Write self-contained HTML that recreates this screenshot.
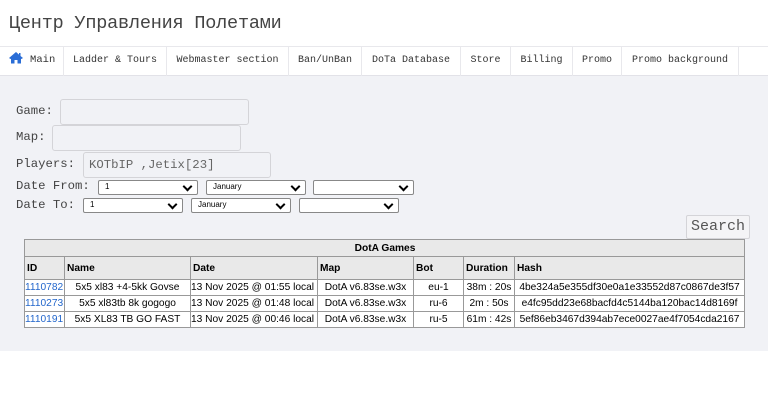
<!DOCTYPE html>
<html><head><meta charset="utf-8"><style>
*{box-sizing:border-box;margin:0;padding:0}
body{width:768px;height:401px;background:#fff;font-family:"Liberation Mono",monospace;color:#333;position:relative;overflow:hidden}
.title{position:absolute;left:9px;top:13px;font-size:18.5px;color:#444;letter-spacing:-0.2px}
.nav{position:absolute;left:0;top:46px;width:768px;height:30px;border-top:1px solid #e8e8ec;border-bottom:1px solid #e2e2e8}
.nav div{position:absolute;top:0;height:29px;line-height:27px;font-size:10px;color:#333;text-align:center;border-right:1px solid #e8e8ec}
.gray{position:absolute;left:0;top:76px;width:768px;height:275px;background:#f1f2f6}
.lbl{position:absolute;font-size:12.3px;color:#444}
.inp{position:absolute;background:#f1f2f6;border:1px solid #d4d4d8;border-radius:3px;font-size:12.3px;color:#666;padding:5px 0 0 5px}
.sel{position:absolute;height:15px;background:#fff;border:1px solid #888;border-radius:2px;font-family:"Liberation Sans",sans-serif;font-size:8px;padding:1px 0 0 6px;color:#000}
.sel::after{content:"";position:absolute;right:6px;top:2px;width:5px;height:5px;border-right:2px solid #000;border-bottom:2px solid #000;transform:rotate(45deg)}
.btn{position:absolute;left:686px;top:215px;width:64px;height:24px;border:1px solid #d4d4d8;border-radius:2px;background:#f4f4f6;font-size:15px;color:#555;text-align:center;line-height:22px}
table{position:absolute;left:24px;top:239px;width:720px;table-layout:fixed;border-collapse:collapse;font-family:"Liberation Sans",sans-serif;font-size:10.2px;color:#000;background:#fff}
td,th{border:1px solid #999;padding:0 1px;height:16px;white-space:nowrap;overflow:hidden}
th{background:#e9e9e9;text-align:left;font-weight:bold;height:23px;padding-left:2px}
th.cap{text-align:center;height:17px}
td{text-align:center}
td a{color:#2266cc;text-decoration:none}
td.l{text-align:left;padding:0}
</style></head><body>
<div class="title">Центр Управления Полетами</div>
<div class="nav">
<div style="left:0;width:64px;font-size:10.5px"><svg width="16" height="13" viewBox="0 0 16 13" style="vertical-align:-2px"><path d="M8 1 L1 7 L2.5 8 L3 7.7 V12.5 H6.5 V9 H9.5 V12.5 H13 V7.7 L13.5 8 L15 7 L12.5 5 V2 H11 V3.6 Z" fill="#2a6dd6"/></svg> Main</div>
<div style="left:64px;width:103px">Ladder &amp; Tours</div>
<div style="left:167px;width:122px">Webmaster section</div>
<div style="left:289px;width:73px">Ban/UnBan</div>
<div style="left:362px;width:99px">DoTa Database</div>
<div style="left:461px;width:50px">Store</div>
<div style="left:511px;width:62px">Billing</div>
<div style="left:573px;width:49px">Promo</div>
<div style="left:622px;width:117px">Promo background</div>
</div>
<div class="gray"></div>
<div class="lbl" style="left:16px;top:104px">Game:</div>
<div class="inp" style="left:60px;top:99px;width:189px;height:26px"></div>
<div class="lbl" style="left:16px;top:130px">Map:</div>
<div class="inp" style="left:52px;top:125px;width:189px;height:26px"></div>
<div class="lbl" style="left:16px;top:157px">Players:</div>
<div class="inp" style="left:83px;top:152px;width:188px;height:26px">KOTbIP ,Jetix[23]</div>
<div class="lbl" style="left:16px;top:179px">Date From:</div>
<div class="sel" style="left:98px;top:180px;width:100px">1</div>
<div class="sel" style="left:206px;top:180px;width:100px">January</div>
<div class="sel" style="left:313px;top:180px;width:101px"></div>
<div class="lbl" style="left:16px;top:198px">Date To:</div>
<div class="sel" style="left:83px;top:198px;width:100px">1</div>
<div class="sel" style="left:191px;top:198px;width:100px">January</div>
<div class="sel" style="left:299px;top:198px;width:100px"></div>
<div class="btn">Search</div>
<table>
<colgroup><col style="width:40px"><col style="width:126px"><col style="width:127px"><col style="width:96px"><col style="width:50px"><col style="width:51px"><col style="width:230px"></colgroup>
<tr><th class="cap" colspan="7">DotA Games</th></tr>
<tr><th>ID</th><th>Name</th><th>Date</th><th>Map</th><th>Bot</th><th>Duration</th><th>Hash</th></tr>
<tr><td class="l"><a>1110782</a></td><td>5x5 xl83 +4-5kk Govse</td><td class="l">13 Nov 2025 @ 01:55 local</td><td>DotA v6.83se.w3x</td><td>eu-1</td><td>38m : 20s</td><td>4be324a5e355df30e0a1e33552d87c0867de3f57</td></tr>
<tr><td class="l"><a>1110273</a></td><td>5x5 xl83tb 8k gogogo</td><td class="l">13 Nov 2025 @ 01:48 local</td><td>DotA v6.83se.w3x</td><td>ru-6</td><td>2m : 50s</td><td>e4fc95dd23e68bacfd4c5144ba120bac14d8169f</td></tr>
<tr><td class="l"><a>1110191</a></td><td>5x5 XL83 TB GO FAST</td><td class="l">13 Nov 2025 @ 00:46 local</td><td>DotA v6.83se.w3x</td><td>ru-5</td><td>61m : 42s</td><td>5ef86eb3467d394ab7ece0027ae4f7054cda2167</td></tr>
</table>
</body></html>
